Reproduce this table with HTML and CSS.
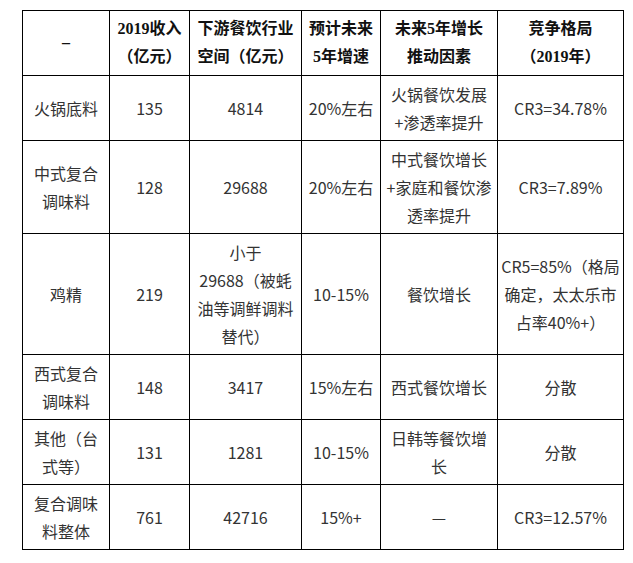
FILE: index.html
```html
<!DOCTYPE html>
<html lang="zh-CN">
<head>
<meta charset="utf-8">
<title>复合调味料</title>
<link rel="stylesheet" href="styles.css">
</head>
<body>
<table class="data">
  <colgroup>
    <col class="c1"><col class="c2"><col class="c3"><col class="c4"><col class="c5"><col class="c6">
  </colgroup>
  <thead>
    <tr>
      <th>–</th>
      <th>2019收入<br>（亿元）</th>
      <th>下游餐饮行业<br>空间（亿元）</th>
      <th>预计未来<br>5年增速</th>
      <th>未来5年增长<br>推动因素</th>
      <th>竞争格局<br>（2019年）</th>
    </tr>
  </thead>
  <tbody>
    <tr>
      <td>火锅底料</td>
      <td>135</td>
      <td>4814</td>
      <td>20%左右</td>
      <td>火锅餐饮发展<br>+渗透率提升</td>
      <td>CR3=34.78%</td>
    </tr>
    <tr>
      <td>中式复合<br>调味料</td>
      <td>128</td>
      <td>29688</td>
      <td>20%左右</td>
      <td>中式餐饮增长<br>+家庭和餐饮渗<br>透率提升</td>
      <td>CR3=7.89%</td>
    </tr>
    <tr>
      <td>鸡精</td>
      <td>219</td>
      <td>小于<br>29688（被蚝<br>油等调鲜调料<br>替代）</td>
      <td>10-15%</td>
      <td>餐饮增长</td>
      <td>CR5=85%（格局<br>确定，太太乐市<br>占率40%+）</td>
    </tr>
    <tr>
      <td>西式复合<br>调味料</td>
      <td>148</td>
      <td>3417</td>
      <td>15%左右</td>
      <td>西式餐饮增长</td>
      <td>分散</td>
    </tr>
    <tr>
      <td>其他（台<br>式等）</td>
      <td>131</td>
      <td>1281</td>
      <td>10-15%</td>
      <td>日韩等餐饮增<br>长</td>
      <td>分散</td>
    </tr>
    <tr>
      <td>复合调味<br>料整体</td>
      <td>761</td>
      <td>42716</td>
      <td>15%+</td>
      <td>—</td>
      <td>CR3=12.57%</td>
    </tr>
  </tbody>
</table>
</body>
</html>
```

FILE: styles.css
```css
html, body {
  margin: 0;
  padding: 0;
  background: #ffffff;
}

body {
  padding: 10px 0 0 22px;
  font-family: "Noto Sans CJK SC", "Noto Sans", sans-serif;
  color: #333333;
}

.data {
  border-collapse: collapse;
  table-layout: fixed;
  width: 601px;
}

.c1 { width: 87px; }
.c2 { width: 80px; }
.c3 { width: 112px; }
.c4 { width: 79px; }
.c5 { width: 117px; }
.c6 { width: 126px; }

.data th,
.data td {
  border: 1px solid #000000;
  padding: 4px 0;
  font-size: 16px;
  line-height: 28px;
  text-align: center;
  vertical-align: middle;
  white-space: nowrap;
  overflow: hidden;
}

.data th {
  font-family: "Liberation Serif", "Noto Sans CJK SC", serif;
  font-weight: bold;
  color: #111111;
}

.data td {
  font-weight: normal;
}
```
